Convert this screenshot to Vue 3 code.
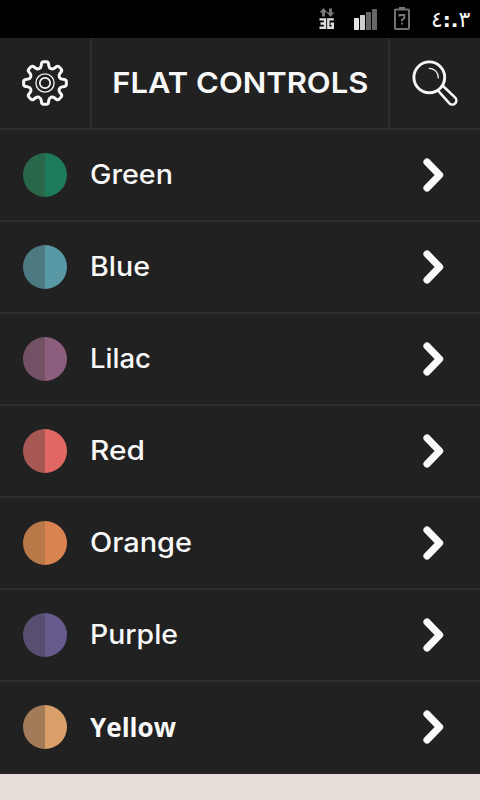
<script setup>
const colors = [
  { name: 'Green', left: '#286749', right: '#1e7b59', width: 83 },
  { name: 'Blue', left: '#4d7a82', right: '#5899a5', width: 60 },
  { name: 'Lilac', left: '#725164', right: '#8c5d7c', width: 61 },
  { name: 'Red', left: '#a85854', right: '#e16762', width: 55 },
  { name: 'Orange', left: '#b97848', right: '#d88350', width: 102 },
  { name: 'Purple', left: '#574e70', right: '#685a8c', width: 88 },
  { name: 'Yellow', left: '#a37b59', right: '#d9a069', width: 86, bold: true }
]

const points = []
for (let tooth = 0; tooth < 8; tooth++) {
  for (const [angle, radius] of [[-15.5, 15.6], [-8.5, 21.6], [8.5, 21.6], [15.5, 15.6]]) {
    const a = ((tooth * 45 + angle - 90) * Math.PI) / 180
    points.push([24 + radius * Math.cos(a), 24 + radius * Math.sin(a)])
  }
}
const gearPath = points.map((p, i) => {
  const prev = points[(i + points.length - 1) % points.length]
  const next = points[(i + 1) % points.length]
  const toward = (q) => {
    const d = Math.hypot(q[0] - p[0], q[1] - p[1])
    const t = 2 / d
    return `${(p[0] + (q[0] - p[0]) * t).toFixed(2)} ${(p[1] + (q[1] - p[1]) * t).toFixed(2)}`
  }
  return `${i ? 'L' : 'M'}${toward(prev)}Q${p[0].toFixed(2)} ${p[1].toFixed(2)} ${toward(next)}`
}).join('') + 'Z'
</script>

<template>
  <main class="screen">
    <div class="status">
      <svg class="network" width="16" height="22" viewBox="0 0 16 22">
        <path d="M4.5 0L8.5 4.5H6V8.5H3V4.5H.5ZM11.5 9L7.5 4.5H10V.5H13V4.5H15.5Z" fill="#777" />
        <path d="M.5 11.4H6V19.8H.5M1.5 15.5H6M14.8 11.4H9.3V19.8H13.8V15.8H11.5" fill="none" stroke="#ddd" stroke-width="2.4" />
      </svg>
      <svg class="signal" width="24" height="22" viewBox="0 0 24 22">
        <rect x="0" y="9" width="5" height="12" rx=".6" fill="#e4e4e4" />
        <rect x="6" y="6" width="5" height="15" rx=".6" fill="#cfcfcf" />
        <rect x="12" y="3" width="5" height="18" rx=".6" fill="#666" />
        <rect x="18" y="0" width="5" height="21" rx=".6" fill="#666" />
      </svg>
      <svg class="battery" width="16" height="23" viewBox="0 0 16 23">
        <path d="M5 0H11V2H5Z" fill="#777" />
        <rect x="1" y="2.5" width="14" height="19.5" rx=".8" fill="none" stroke="#707070" stroke-width="2" />
        <path d="M5.5 9.5V8H10.2V11.2L8 12.7V14.4M8 15.7V17.6" fill="none" stroke="#777" stroke-width="1.9" />
      </svg>
      <time class="clock">٤<span class="dots">:.</span>٣</time>
    </div>

    <header class="header">
      <button class="action settings" aria-label="Settings">
        <svg width="48" height="48" viewBox="0 0 48 48" fill="none" stroke="#f8f8f8">
          <path :d="gearPath" stroke-width="3" stroke-linejoin="round" />
          <circle cx="24" cy="24" r="9.1" stroke-width="1.3" />
          <circle cx="24" cy="24" r="5.2" stroke-width="1.7" />
        </svg>
      </button>
      <h1 class="title">
        <svg width="296" height="48">
          <text x="20.3" y="33.5" textLength="256" lengthAdjust="spacingAndGlyphs">FLAT CONTROLS</text>
        </svg>
      </h1>
      <button class="action search" aria-label="Search">
        <svg width="48" height="48" viewBox="0 0 48 48" fill="none" stroke="#f8f8f8" stroke-linecap="round">
          <circle cx="18.3" cy="18.3" r="15.4" stroke-width="2.9" />
          <path d="M18.3 9.3A9 9 0 0 1 27.3 18.8" stroke-width="1.3" />
          <path d="M31.5 26.5L44.2 38.7A3.9 3.9 0 0 1 38.4 44.4L26.8 31.3" stroke-width="2.5" />
        </svg>
      </button>
    </header>

    <ul class="list">
      <li v-for="color in colors" :key="color.name" class="row">
        <svg class="swatch" width="44" height="44" viewBox="0 0 44 44">
          <path d="M22 0A22 22 0 0 0 22 44Z" :fill="color.left" />
          <path d="M22 0A22 22 0 0 1 22 44Z" :fill="color.right" />
        </svg>
        <svg class="label" :class="{ bold: color.bold }" height="40">
          <text x="0" :y="color.bold ? 30 : 29" :textLength="color.width" lengthAdjust="spacingAndGlyphs">{{ color.name }}</text>
        </svg>
        <svg class="chevron" width="24" height="36" viewBox="0 0 24 36">
          <path d="M5 5L17.6 18L5 31" fill="none" stroke="#fafafa" stroke-width="7.2" stroke-linecap="round" stroke-linejoin="round" />
        </svg>
      </li>
    </ul>
    <footer class="footer"></footer>
  </main>
</template>

<style>
body { margin: 0; background: #e6dfd9; }
</style>

<style scoped>
.screen { width: 480px; height: 800px; display: flex; flex-direction: column; overflow: hidden; background: #212121; color: #f8f8f8; }
.status { box-sizing: border-box; height: 38px; flex: none; display: flex; align-items: flex-start; justify-content: flex-end; padding: 8px 9px 0 0; background: #000; }
.network { margin-right: 19px; }
.signal { margin: 1px 16px 0 0; }
.battery { margin: -1px 21px 0 0; }
.clock { width: 40px; direction: ltr; unicode-bidi: bidi-override; white-space: nowrap; font: 22px/24px "DejaVu Sans", sans-serif; }
.dots { font-weight: 700; font-size: 20px; line-height: 1; }
.header { box-sizing: border-box; height: 92px; flex: none; display: flex; border-bottom: 2px solid #2d2d2d; }
.action { box-sizing: border-box; width: 92px; display: flex; align-items: center; justify-content: center; margin: 0; padding: 0; border: 0; background: none; }
.action svg { display: block; }
.settings { border-right: 2px solid #2d2d2d; }
.search { border-left: 2px solid #2d2d2d; }
.title { flex: 1; display: flex; align-items: center; margin: 0; font: 600 29px Inter, sans-serif; }
.title text, .label text { fill: #f8f8f8; }
.list { flex: none; margin: 0; padding: 0; list-style: none; }
.row { box-sizing: border-box; height: 92px; display: flex; align-items: center; padding: 0 34px 0 23px; border-bottom: 2px solid #2d2d2d; }
.row:last-child { border-bottom-color: #2b2428; }
.swatch { flex: none; margin-right: 22.5px; }
.label { flex: 1; min-width: 0; font: 550 26.5px Inter, sans-serif; }
.bold { font: 700 26.7px "Open Sans", "Noto Sans", sans-serif; }
.chevron { flex: none; }
.footer { flex: 1; background: #e6dfd9; }
</style>
